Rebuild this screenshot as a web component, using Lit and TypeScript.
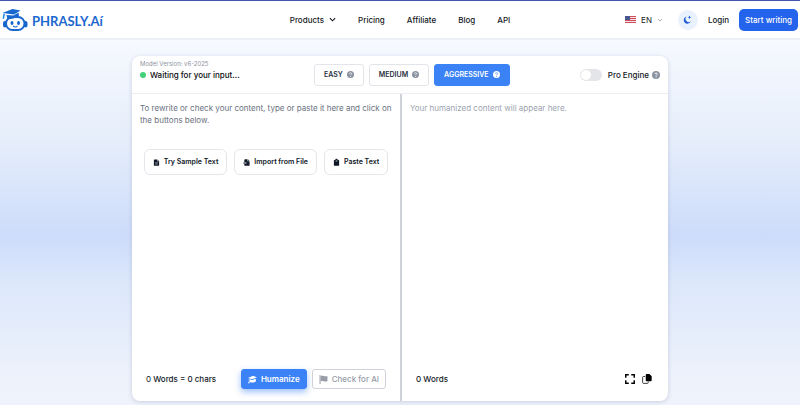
import { LitElement, html, svg, css } from "lit";
import { customElement, property, state } from "lit/decorators.js";
import { classMap } from "lit/directives/class-map.js";

const icons = {
  help: svg`<circle cx="8" cy="8" r="8" fill="currentColor"/><path d="M5.6 6.2C5.7 4.7 6.700 3.900 8.100 3.900c1.500 0 2.500.9 2.500 2.100 0 1.700-2.400 1.700-2.400 3.300" fill="none" stroke="var(--mark, #fff)" stroke-width="1.700"/><circle cx="8.200" cy="11.800" r="1.200" fill="var(--mark, #fff)"/>`,
  chevron: svg`<path d="M2 5l6 6 6-6" fill="none" stroke="currentColor" stroke-width="var(--weight, 2)"/>`,
  moon: svg`<path d="M6.500 2.500A6.500 6.500 0 1 0 14 11 5.200 5.200 0 0 1 6.500 2.500z" fill="currentColor"/><path d="M11.500 1l.9 2.300 2.300.9-2.300.9-.9 2.300-.9-2.300-2.300-.9 2.300-.9z" fill="currentColor"/>`,
  file: svg`<path d="M3 1h6.500v4H14v9a1.500 1.500 0 0 1-1.500 1.500h-9A1.500 1.500 0 0 1 2 14V2a1 1 0 0 1 1-1zM10.500 1L14 4.200h-3.500z" fill="currentColor"/><path d="M5 8.500h6M5 11.500h6" stroke="#fff" stroke-width="1"/>`,
  import: svg`<path d="M5 .5h5v4.500h5v9a1.500 1.500 0 0 1-1.500 1.500h-9A1.500 1.500 0 0 1 3 14V2.500A2 2 0 0 1 5 .5zM11 .5l4 3.700h-4z" fill="currentColor"/><path d="M3 9.500h6" stroke="#fff" stroke-width="3.600"/><path d="M0 9.500h8M6 6.500l3.500 3L6 12.500" stroke="currentColor" stroke-width="1.700" fill="none"/>`,
  paste: svg`<path d="M3.500 2.500H5a3 3 0 0 1 6 0h1.500A1.500 1.500 0 0 1 14 4v10a1.500 1.500 0 0 1-1.500 1.500h-9A1.500 1.500 0 0 1 2 14V4a1.500 1.500 0 0 1 1.500-1.500z" fill="currentColor"/><path d="M5.500 5h5" stroke="#fff" stroke-width="1"/><circle cx="8" cy="2.600" r=".9" fill="#fff"/>`,
  cap: svg`<path d="M0 5.200L9 1.500l7 2.600-8.500 3.400z" fill="currentColor"/><path d="M3.500 7.500l4 1.500 6.500-2.500v4.500c-2 2.800-8 3.500-10.500 1z" fill="currentColor"/><path d="M1.500 6v5.500L0 14.500h3L2.500 6.500z" fill="currentColor"/>`,
  flag: svg`<path d="M1 0h1.800v16H1z" fill="currentColor"/><path d="M3 2c4-2 6 1.500 12 0v9c-6 1.800-8-1.700-12 0z" fill="currentColor"/>`,
  expand: svg`<path d="M1.200 6V1.200H6M10 1.200h4.800V6M14.800 10v4.800H10M6 14.800H1.200V10" fill="none" stroke="currentColor" stroke-width="2.300"/>`,
  copy: svg`<path d="M5 4H2.500A1.500 1.500 0 0 0 1 5.500v8A1.500 1.500 0 0 0 2.500 15h6a1.500 1.500 0 0 0 1.500-1.500V12" fill="none" stroke="currentColor" stroke-width="1.200"/><path d="M7.500 0H12l3.500 3.500V10a1.500 1.500 0 0 1-1.500 1.500H7.500A1.500 1.500 0 0 1 6 10V1.500A1.500 1.500 0 0 1 7.500 0z" fill="currentColor"/>`,
};

@customElement("ui-icon")
class UiIcon extends LitElement {
  @property() name: keyof typeof icons = "help";

  static styles = css`
    :host { display: inline-block; flex: none; width: 7px; height: 7px; }
    svg { display: block; width: 100%; height: 100%; overflow: visible; }
  `;

  render() {
    return html`<svg viewBox="0 0 16 16" aria-hidden="true">${icons[this.name]}</svg>`;
  }
}

@customElement("site-header")
class SiteHeader extends LitElement {
  static styles = css`
    :host {
      display: grid;
      grid-template-columns: 1fr auto 1fr;
      align-items: center;
      box-sizing: border-box;
      height: 40px;
      padding: 0 2px;
      background: #fff;
      border-top: 1px solid #4257ae;
      border-bottom: 2px solid #eceff4;
      font-size: 8px;
      font-weight: 500;
      color: #15181e;
    }
    a { color: inherit; text-decoration: none; }
    .brand { display: flex; align-items: center; gap: 4px; color: #1c68cf; font: 700 13px/16px Lato, sans-serif; }
    .robot { width: 26px; height: 22px; }
    .name { padding-top: 3px; }
    nav { display: flex; align-items: center; gap: 22px; }
    .menu { display: flex; align-items: center; gap: 5px; }
    .tools { display: flex; align-items: center; justify-content: flex-end; }
    button { font: inherit; color: inherit; border: 0; padding: 0; background: none; cursor: pointer; }
    .lang { display: flex; align-items: center; gap: 5px; margin-right: 15px; font-weight: 400; }
    .flag { width: 11px; height: 7px; }
    .small { width: 6px; height: 6px; color: #8b919c; }
    .arrow { width: 7px; height: 7px; --weight: 2.600; }
    .theme { display: grid; place-items: center; width: 20px; height: 20px; margin-right: 10px; border-radius: 50%; background: #e9f1fd; color: #1d5bd6; }
    .moon { width: 9px; height: 9px; }
    .login { margin-right: 10px; }
    .start { height: 22px; padding: 0 6px; border-radius: 5px; background: #2463eb; color: #fff; white-space: nowrap; }
  `;

  render() {
    return html`
      <a class="brand" href="#">
        <svg class="robot" viewBox="0 0 52 44" aria-hidden="true">
          <rect x="2" y="24" width="8" height="13" rx="4" fill="#1767cf"/>
          <rect x="43" y="24" width="8" height="13" rx="4" fill="#1767cf"/>
          <rect x="8" y="16" width="37" height="26" rx="13" fill="#fff" stroke="#1767cf" stroke-width="4"/>
          <path d="M1 8L21 0l16 3-13 8z" fill="#1767cf"/>
          <path d="M9 12l14 1 10-6 1 8-11 4-12 2z" fill="#1767cf"/>
          <path d="M3 9l3 1-2 10-3-1z" fill="#2d8bea"/>
          <ellipse cx="20" cy="28" rx="3" ry="4" fill="#1767cf"/>
          <ellipse cx="33" cy="28" rx="3" ry="4" fill="#1767cf"/>
          <path d="M22 34q4.500 4 9 0" fill="none" stroke="#1767cf" stroke-width="2.200"/>
        </svg>
        <span class="name">PHRASLY.Aí</span>
      </a>
      <nav>
        <a class="menu" href="#">Products <ui-icon class="arrow" name="chevron"></ui-icon></a>
        <a href="#">Pricing</a><a href="#">Affiliate</a><a href="#">Blog</a><a href="#">API</a>
      </nav>
      <div class="tools">
        <button class="lang">
          <svg class="flag" viewBox="0 0 22 14" aria-hidden="true">
            <rect width="22" height="14" fill="#f3dfe2"/>
            <path d="M0 1h22M0 5h22M0 9h22M0 13h22" stroke="#cf4f5c" stroke-width="2"/>
            <rect width="10" height="8" fill="#4a5690"/>
          </svg>
          EN <ui-icon class="small" name="chevron"></ui-icon>
        </button>
        <button class="theme" aria-label="Dark mode"><ui-icon class="moon" name="moon"></ui-icon></button>
        <a class="login" href="#">Login</a>
        <button class="start">Start writing</button>
      </div>`;
  }
}

@customElement("app-root")
class AppRoot extends LitElement {
  @state() private mode = "AGGRESSIVE";
  @state() private text = "";

  static styles = css`
    :host {
      display: flex;
      flex-direction: column;
      min-height: 100vh;
      font-family: Inter, sans-serif;
      font-size: 8px;
      line-height: 12px;
      color: #111827;
      background: linear-gradient(#f6f9fe 40px, #e6eefb 140px, #cddcfa 235px, #dde8fb 285px, #ecf1fb 370px, #f0f3fb);
    }
    button { display: flex; align-items: center; justify-content: center; box-sizing: border-box; margin: 0; font: inherit; color: inherit; white-space: nowrap; background: #fff; cursor: pointer; }
    .card {
      flex: 1;
      display: flex;
      flex-direction: column;
      width: 67%;
      margin: 16px auto 4px;
      border-radius: 8px;
      background: #fff;
      box-shadow: 0 1px 4px #8d9ab566;
    }
    .bar { display: flex; align-items: center; box-sizing: border-box; height: 38px; padding: 0 8px; border-bottom: 1px solid #eceef2; }
    .status { flex: 0 0 174px; padding-bottom: 8px; font-weight: 500; }
    .version { font-size: 6px; line-height: 8px; font-weight: 400; color: #8c929d; }
    .state { display: flex; align-items: center; gap: 4px; line-height: 14px; color: #090b10; }
    .dot { width: 6px; height: 6px; border-radius: 50%; background: #45d07b; }
    .modes { display: flex; gap: 5px; }
    .mode { gap: 4px; height: 22px; padding: 0 9px; border: 1px solid #e3e5ea; border-radius: 3px; font-size: 7px; font-weight: 600; color: #283142; }
    .mode ui-icon, .pro ui-icon { color: #8b93a1; }
    .mode.on { background: #3b82f6; border-color: #3b82f6; color: #fff; }
    .mode.on ui-icon { color: #fff; --mark: #3b82f6; }
    .pro { display: flex; align-items: center; margin-left: auto; font-weight: 500; }
    .switch { appearance: none; display: flex; box-sizing: border-box; width: 22px; height: 12px; margin: 0 6px 0 0; padding: 1px; border-radius: 6px; background: #e4e5e8; }
    .switch::before { content: ""; width: 10px; height: 10px; border-radius: 50%; background: #fff; }
    .switch:checked { justify-content: flex-end; background: #3b82f6; }
    .pro ui-icon { width: 8px; height: 8px; margin-left: 3px; }
    .panes { flex: 1; display: grid; grid-template-columns: 1fr 1fr; }
    .pane { display: flex; flex-direction: column; min-width: 0; }
    .pane + .pane { border-left: 2px solid #cfd2d9; }
    textarea { display: block; box-sizing: border-box; width: 100%; height: 48px; padding: 8px 8px 0; border: 0; outline: 0; resize: none; background: none; font: inherit; color: inherit; overflow: hidden; }
    textarea::placeholder { color: #6b7280; opacity: 1; }
    .result { flex: 1; }
    .result::placeholder { color: #9ca3af; }
    .starters { display: flex; justify-content: center; gap: 7px; margin-top: 7px; }
    .starter { gap: 4px; height: 26px; padding: 0 8px; border: 1px solid #e3e6eb; border-radius: 6px; font-size: 7px; font-weight: 600; }
    .foot { display: flex; align-items: center; gap: 5px; height: 20px; margin-top: auto; padding: 0 14px 12px; }
    .count { margin-right: auto; font-weight: 500; }
    .num { font-weight: 400; }
    .act { gap: 4px; height: 20px; padding: 0 6px; border: 1px solid #cfd2d9; border-radius: 3px; font-weight: 500; color: #979ca7; }
    .act ui-icon { width: 9px; height: 9px; }
    .main { border-color: #3b82f6; background: #3b82f6; color: #fff; font-weight: 600; box-shadow: 0 3px 6px #3b82f680; }
    .tool { padding: 0; border: 0; color: #000; }
    .tool ui-icon { width: 10px; height: 10px; }
    .out { gap: 7px; padding-right: 16px; }
  `;

  render() {
    const words = this.text.split(/\s+/).filter(Boolean).length;
    return html`
      <site-header></site-header>
      <main class="card">
        <div class="bar">
          <div class="status">
            <div class="version">Model Version: v6-2025</div>
            <div class="state"><span class="dot"></span>Waiting for your input...</div>
          </div>
          <div class="modes">
            ${["EASY", "MEDIUM", "AGGRESSIVE"].map((m) => html`
              <button class=${classMap({ mode: true, on: m === this.mode })} @click=${() => (this.mode = m)}>${m}<ui-icon name="help"></ui-icon></button>`)}
          </div>
          <div class="pro">
            <input class="switch" id="pro" type="checkbox" role="switch">
            <label for="pro">Pro Engine</label>
            <ui-icon name="help"></ui-icon>
          </div>
        </div>
        <div class="panes">
          <section class="pane">
            <textarea aria-label="Your content" placeholder="To rewrite or check your content, type or paste it here and click on the buttons below."
              @input=${(e: Event) => (this.text = (e.target as HTMLTextAreaElement).value)}></textarea>
            <div class="starters">
              <button class="starter"><ui-icon name="file"></ui-icon>Try Sample Text</button>
              <button class="starter"><ui-icon name="import"></ui-icon>Import from File</button>
              <button class="starter"><ui-icon name="paste"></ui-icon>Paste Text</button>
            </div>
            <div class="foot">
              <span class="count"><span class="num">${words}</span> Words = ${this.text.length} chars</span>
              <button class="act main"><ui-icon name="cap"></ui-icon>Humanize</button>
              <button class="act"><ui-icon name="flag"></ui-icon>Check for AI</button>
            </div>
          </section>
          <section class="pane">
            <textarea class="result" readonly aria-label="Humanized content" placeholder="Your humanized content will appear here."></textarea>
            <div class="foot out">
              <span class="count">0 Words</span>
              <button class="tool" aria-label="Full screen"><ui-icon name="expand"></ui-icon></button>
              <button class="tool" aria-label="Copy"><ui-icon name="copy"></ui-icon></button>
            </div>
          </section>
        </div>
      </main>`;
  }
}
